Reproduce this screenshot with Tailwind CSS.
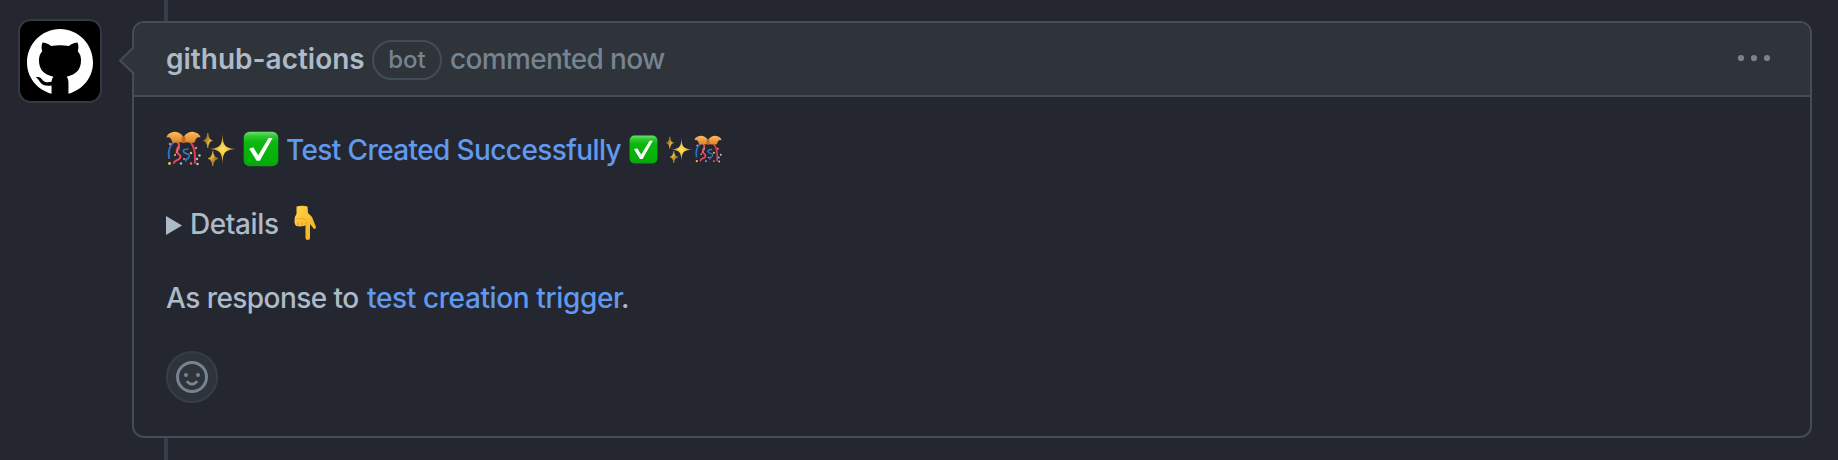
<!DOCTYPE html>
<html lang="en">
<head>
<meta charset="utf-8">
<title>Comment</title>
<script src="https://cdn.jsdelivr.net/npm/@tailwindcss/browser@4"></script>
</head>
<body class="h-[460px] overflow-hidden bg-[#24272f] font-['Inter',sans-serif] text-[28px] leading-[42px] font-[450] text-[#adbac7]">
<svg class="absolute size-0">
  <defs>
    <linearGradient id="cg" x1="0" y1="0" x2="0" y2="1"><stop offset="0" stop-color="#6be06c"/><stop offset=".14" stop-color="#2fc52f"/><stop offset=".3" stop-color="#0cb80f"/><stop offset=".9" stop-color="#04ae08"/><stop offset="1" stop-color="#149a18"/></linearGradient>
    <radialGradient id="sg"><stop offset="0" stop-color="#ffe35c"/><stop offset=".4" stop-color="#f5c63f"/><stop offset="1" stop-color="#8a622b"/></radialGradient>
    <linearGradient id="bg" x1="0" y1="0" x2="0" y2="1"><stop offset="0" stop-color="#ffb95c"/><stop offset="1" stop-color="#dd842a"/></linearGradient>
  </defs>
  <symbol id="check" viewBox="0 0 36 36">
    <rect x=".7" y=".7" width="34.6" height="34.6" rx="6" fill="url(#cg)"/>
    <path d="M6.200 17.800l4-1.500 5 8L25.600 7h4L16.800 29.800h-3.200z" fill="#fff"/>
  </symbol>
  <symbol id="sparkles" viewBox="0 0 34 36">
    <path d="M19.500 2.500C20 14 21 17 33 18C21 19 20 22 19.500 33.500C19 22 18 19 6.500 18C18 17 19 14 19.500 2.500z" fill="url(#sg)"/>
    <path d="M4.800 2Q5.500 8.800 9.500 9.500Q5.500 10.500 4.800 17Q4.200 10.500.5 9.500Q4.200 8.800 4.800 2zM9.800 20Q10.500 26.500 15 27.500Q10.500 28.500 9.800 35Q9.200 28.500 5 27.500Q9.200 26.500 9.800 20z" fill="url(#sg)" stroke="#d9a838" stroke-width=".5"/>
  </symbol>
  <symbol id="confetti" viewBox="0 0 35 36">
    <g fill="none" stroke-linecap="round" stroke-width="1.800">
      <path d="M8 11C3 15 2 20 3 27" stroke="#2d6fd2" stroke-width="2"/>
      <path d="M12 12c4 3-3 5-1 9s5 3 3 6-6 2-6 5" stroke="#ee4864" stroke-width="2"/>
      <path d="M25 12c5 5 4 14 4 20" stroke="#e03d59" stroke-width="2"/>
      <path d="M22 18c-5 0-6 2-3 4s5 0 4 4-5 0-3 4" stroke="#3478cf" stroke-width="1.600"/>
      <path d="M13 16c1 3-2 4-3 6" stroke="#f4a4ae" stroke-width="1"/>
    </g>
    <g fill="#f8c33e"><circle cx="3.500" cy="32.500" r="1.400"/><circle cx="25" cy="22" r="1.200"/><circle cx="9" cy="24" r="1"/></g>
    <g fill="#e87b8c"><circle cx="4" cy="13" r="1.200"/><circle cx="30" cy="17" r="1.200"/><circle cx="18" cy="28" r="1"/></g>
    <g fill="#8ebaf0"><circle cx="15" cy="32.500" r="1.200"/><circle cx="31" cy="28" r="1.200"/></g>
    <circle cx="33.500" cy="24.500" r="1.200" fill="#ddc08c"/><circle cx="31.500" cy="33" r="1.200" fill="#e9b7c0"/><circle cx="25" cy="32.500" r="1.200" fill="#e5784f"/>
    <path d="M17.500 6C14 1 9 0 5.500 1.500 2.500 2.500 1 4 .5 6.500c3-1 4.500 0 6 5C10 12 13 11.500 17.500 11z" fill="url(#bg)"/>
    <path d="M17.500 6C21 1 26 0 29.500 1.500c3 1 4.500 2.500 5 5-3-1-4.500 0-6 5-3.500.5-6.500 0-11-.5z" fill="url(#bg)"/>
    <path d="M15.800 5.500h3.400V12h-3.400z" fill="#b9692a"/>
  </symbol>
</svg>
<div class="relative h-full">
  <div class="absolute inset-y-0 left-[164px] w-1 bg-[#373e47]"></div>
  <div class="relative flex h-full items-start pt-[19px] pl-[18px]">
    <div class="size-[84px] shrink-0 rounded-[13px] border-2 border-[#343941] bg-black">
      <svg class="ml-[7px] mt-2 h-[66px] w-[66px]" viewBox="0 0 16 16" preserveAspectRatio="none"><path fill="#fff" d="M8 0C3.580 0 0 3.640 0 8.130c0 3.570 2.400 6.600 5.950 7.570V13.700c-1.200.15-2.200.05-2.800-.85-.3-.5-.6-.9-1-1.150.8-.25 1.150.05 1.600.65.6.7 1.300.6 2.200.45.05-.5.150-.9.450-1.250C4.300 11.200 2.900 10 2.900 7.600c0-.9.250-1.600.8-2.200-.15-.4-.3-1.200.05-2.100.7.050 1.450.350 2.100.8 1.400-.2 2.900-.2 4.300 0 .65-.45 1.400-.75 2.100-.8.350.9.2 1.700.05 2.100.55.6.8 1.300.8 2.200 0 2.400-1.400 3.600-3.500 3.950.3.300.45.8.45 1.550v2.600C13.600 14.730 16 11.700 16 8.130 16 3.640 12.420 0 8 0z"/></svg>
    </div>
    <main class="relative mt-0.5 ml-[30px] h-[417px] w-[1680px] rounded-xl border-2 border-[#444c56] bg-[#24272f]">
      <header class="flex h-[74px] items-center rounded-t-[10px] border-b-2 border-[#444c56] bg-[#2f343b] pl-8 pr-[39px] text-[#768390]">
        <strong class="w-[206px] whitespace-nowrap font-semibold text-[#adbac7]">github-actions</strong>
        <span class="mt-0.5 flex h-10 w-[70px] items-center justify-center rounded-full border-2 border-[#444c56] text-2xl font-medium">bot</span>
        <span class="ml-2 whitespace-nowrap tracking-[-0.66px]">commented now</span>
        <svg class="ml-auto h-2 w-[34px] -translate-y-px" viewBox="0 0 34 8" fill="#768390"><circle cx="4" cy="4" r="3.100"/><circle cx="17" cy="4" r="3.100"/><circle cx="30" cy="4" r="3.100"/></svg>
      </header>
      <svg class="absolute -left-4 top-6 h-[28px] w-[17px]" viewBox="0 0 17 28"><path d="M17 0L2 14l15 14z" fill="#2f343b"/><path d="M15.500 0v.5L2 13.500l13.500 13V28" fill="none" stroke="#444c56" stroke-width="2"/></svg>
      <div class="px-8 pt-8">
        <p class="flex h-[42px] items-center text-[#6199ee]">
          <svg class="h-9 w-[35px] -translate-y-px"><use href="#confetti"/></svg><svg class="ml-0.5 h-9 w-[34px] -translate-y-px"><use href="#sparkles"/></svg><svg class="ml-[6px] size-9 -translate-y-px"><use href="#check"/></svg>
          <a class="ml-[7px] w-[335px] whitespace-nowrap tracking-[-0.61px]">Test Created Successfully</a>
          <svg class="ml-[8px] size-[29px] -translate-y-px"><use href="#check"/></svg><svg class="ml-2 h-[29px] w-[27px] -translate-y-px"><use href="#sparkles"/></svg><svg class="ml-px h-[29px] w-7 -translate-y-px"><use href="#confetti"/></svg>
        </p>
        <div class="mt-8 flex h-[42px] items-center">
          <svg class="mt-0.5 h-[19px] w-4" viewBox="0 0 16 19"><path d="M0 0l16 9.500L0 19z" fill="#adbac7"/></svg>
          <span class="ml-[8px] w-[103px] tracking-[-0.4px]">Details</span>
          <svg class="h-9 w-6 -translate-y-px" viewBox="0 0 24 36"><defs><linearGradient id="hg" x1="0" y1="0" x2="1" y2="1"><stop offset="0" stop-color="#ffd54a"/><stop offset="1" stop-color="#f5ac1d"/></linearGradient></defs><path d="M3.500 1.500Q9 0 14.500 1.500L15 8l4 4 4 10q0 2-2 2l-4-5v14q0 2-2.200 2t-2.300-2V20.500q-5 1.500-9 .5-2-1-2-5Q1 12 3.500 9z" fill="url(#hg)"/><path d="M5 17v3.500M9 17v4M13 17v4" stroke="#d98b14" stroke-width=".8"/><path d="M3.500 14q6-2 10 1" stroke="#e59a18" fill="none" stroke-width=".8"/></svg>
        </div>
        <p class="mt-8 flex h-[42px] items-center whitespace-nowrap">
          <span class="w-[201px] tracking-[-0.55px]">As response to</span><a class="w-[254px] tracking-[-0.38px] text-[#6199ee]">test creation trigger</a><span>.</span>
        </p>
        <div class="mt-8 flex size-[52px] items-center justify-center rounded-full border-2 border-[#373e47] bg-[#2f343b]">
          <svg class="size-8" viewBox="0 0 32 32" fill="none" stroke="#768390" stroke-width="3" stroke-linecap="round"><circle cx="16" cy="16" r="14.500"/><path d="M11.500 21q4.500 4.500 9 0" stroke-width="2.800"/><g fill="#768390" stroke="none"><circle cx="10" cy="14" r="2"/><circle cx="22" cy="14" r="2"/></g></svg>
        </div>
      </div>
    </main>
  </div>
</div>
</body>
</html>
